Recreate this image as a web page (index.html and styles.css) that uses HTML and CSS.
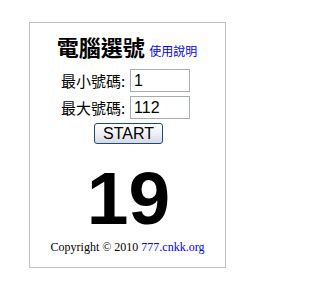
FILE: index.html
```html
<!DOCTYPE html>
<html>
<head>
<meta charset="utf-8">
<link rel="stylesheet" href="styles.css">
</head>
<body>
<div class="box">
  <div class="title"><span class="name">電腦選號</span> <a class="help" href="#">使用說明</a></div>
  <div class="row"><label class="lbl">最小號碼:</label><input class="num" type="text" value="1"></div>
  <div class="row"><label class="lbl">最大號碼:</label><input class="num" type="text" value="112"></div>
  <div class="btnrow"><button class="start">START</button></div>
  <div class="result">19</div>
  <div class="copy">Copyright © 2010 <a class="site" href="#">777.cnkk.org</a></div>
</div>
</body>
</html>
```
FILE: styles.css
```css
html, body {
  margin: 0;
  padding: 0;
  background: #ffffff;
}
body {
  padding: 22px 0 0 29px;
}
.box {
  width: 195px;
  height: 244px;
  border: 1px solid #c0c0c0;
  text-align: center;
  font-family: "Liberation Sans", Arial, sans-serif;
  color: #000;
}
.title {
  height: 46px;
  line-height: 46px;
  white-space: nowrap;
  margin-left: -1px;
}
.name {
  font-family: "Noto Sans CJK TC", sans-serif;
  font-weight: bold;
  font-size: 22px;
}
.help {
  font-family: "Noto Sans CJK TC", sans-serif;
  font-size: 12px;
  color: #0000ff;
  text-decoration: none;
}
.row {
  height: 23px;
  margin-bottom: 4px;
  display: flex;
  justify-content: center;
  align-items: center;
  margin-left: -4px;
}
.lbl {
  font-family: "Noto Sans CJK TC", sans-serif;
  font-size: 15px;
  margin-right: 5px;
}
.num {
  box-sizing: border-box;
  width: 60px;
  height: 23px;
  margin: 0;
  padding: 0 3px;
  border: 1px solid #a5acb2;
  font-family: "Liberation Sans", Arial, sans-serif;
  font-size: 16px;
  color: #000;
  outline: none;
}
.btnrow {
  height: 21px;
  margin-top: 1px;
  display: flex;
  justify-content: center;
}
.start {
  box-sizing: border-box;
  width: 69px;
  height: 21px;
  margin: 0 0 0 2px;
  padding: 0;
  border: 1px solid #1c4a80;
  border-radius: 3px;
  background: linear-gradient(#ffffff, #f0f0f4 50%, #d6d8e4);
  font-family: "Liberation Sans", Arial, sans-serif;
  font-size: 16px;
  line-height: 19px;
  color: #000;
}
.result {
  margin-top: 17px;
  height: 75px;
  line-height: 75px;
  font-family: "Liberation Sans", Arial, sans-serif;
  font-weight: bold;
  font-size: 75px;
  margin-left: 2px;
}
.copy {
  margin-top: 4px;
  font-family: "Liberation Serif", "Times New Roman", serif;
  font-size: 12px;
  line-height: 15px;
  white-space: nowrap;
}
.site {
  color: #0000ff;
  text-decoration: none;
}
```
